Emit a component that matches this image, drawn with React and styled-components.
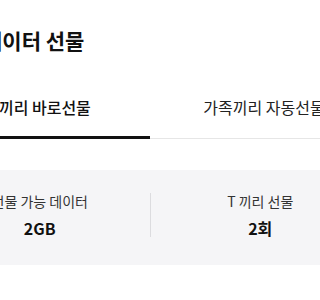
import React from "react";
import styled, { createGlobalStyle } from "styled-components";

const GlobalStyle = createGlobalStyle`
  html, body {
    margin: 0;
    overflow: hidden;
  }
  body {
    background: #fff;
    font-family: "Noto Sans CJK KR", "Noto Sans", sans-serif;
    color: #111;
  }
`;

const Viewport = styled.div`
  width: 100vw;
  height: 100vh;
  overflow: hidden;
`;

const Page = styled.div`
  width: 440px;
  margin-left: -70px;
  padding-top: 25px;
`;

const Title = styled.h1`
  margin: 0;
  padding-left: 53px;
  font-size: 21px;
  line-height: 31px;
  font-weight: 700;
  color: #111;
`;

const TabList = styled.div`
  display: grid;
  grid-template-columns: 220px 228px;
  margin-top: 40px;
`;

const Tab = styled.div`
  text-align: center;
  font-size: 16px;
  line-height: 22px;
  font-weight: ${p => (p.$active ? 500 : 400)};
  color: ${p => (p.$active ? "#111" : "#222")};
  padding-bottom: ${p => (p.$active ? "18px" : "20px")};
  border-bottom: ${p => (p.$active ? "3px solid #111" : "1px solid #e6e6e6")};
  white-space: nowrap;
`;

const Stats = styled.div`
  display: grid;
  grid-template-columns: 1fr 1px 1fr;
  margin-top: 31px;
  padding: 21px 0 26px;
  background: #f5f5f7;
`;

const Stat = styled.div`
  display: flex;
  flex-direction: column;
  align-items: center;
  gap: 6px;
`;

const Label = styled.span`
  font-size: 14px;
  line-height: 20px;
  color: #333;
  white-space: nowrap;
`;

const Value = styled.strong`
  font-size: 16px;
  line-height: 22px;
  font-weight: 700;
  color: #111;
`;

const Divider = styled.div`
  align-self: center;
  height: 44px;
  background: #dcdcdf;
`;

const tabs = [
  { id: "t", name: "T끼리 바로선물", active: true },
  { id: "family", name: "가족끼리 자동선물" },
];

export default function App() {
  return (
    <Viewport>
      <GlobalStyle />
      <Page>
        <Title>데이터 선물</Title>
        <TabList>
          {tabs.map(tab => (
            <Tab key={tab.id} $active={tab.active}>
              {tab.name}
            </Tab>
          ))}
        </TabList>
        <Stats>
          <Stat>
            <Label>선물 가능 데이터</Label>
            <Value>2GB</Value>
          </Stat>
          <Divider />
          <Stat>
            <Label>T 끼리 선물</Label>
            <Value>2회</Value>
          </Stat>
        </Stats>
      </Page>
    </Viewport>
  );
}
